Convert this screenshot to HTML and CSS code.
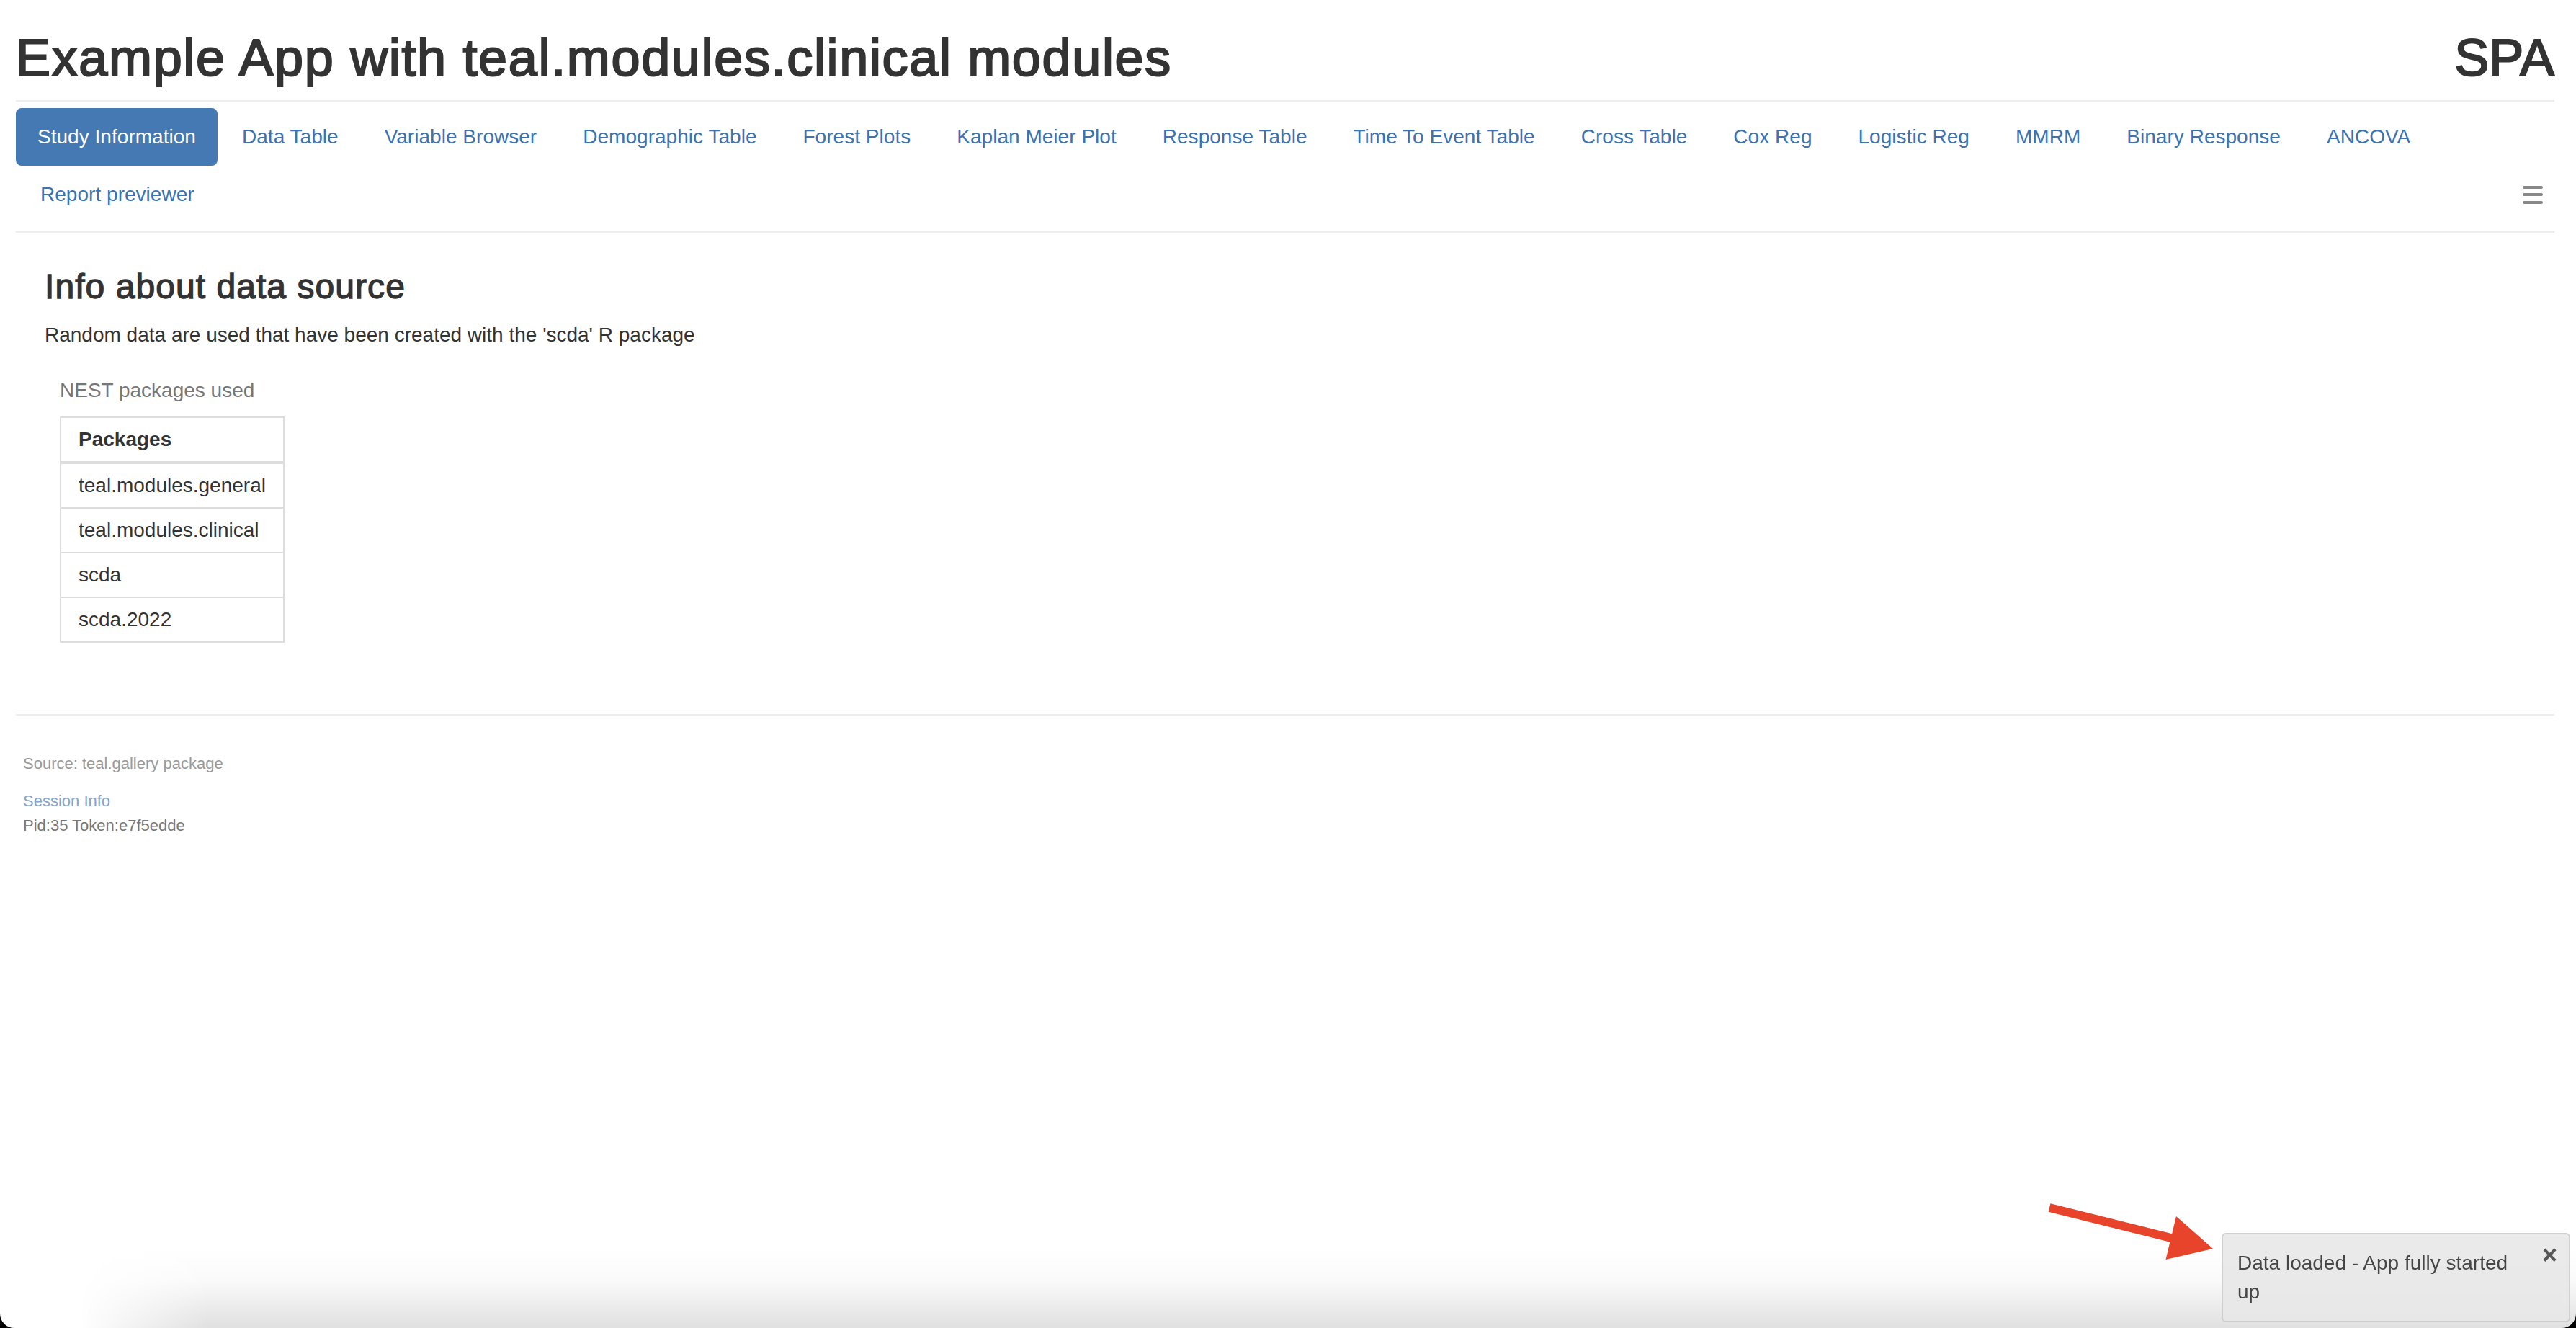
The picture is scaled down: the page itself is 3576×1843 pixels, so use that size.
FILE: index.html
```
<!DOCTYPE html>
<html lang="en">
<head>
<meta charset="utf-8">
<title>Example App with teal.modules.clinical modules</title>
<link rel="stylesheet" href="styles.css">
</head>
<body>
<div class="page">
  <header class="app-header">
    <h1 class="app-title">Example App with teal.modules.clinical modules</h1>
    <span class="app-brand">SPA</span>
  </header>
  <hr class="rule">
  <nav class="tabs">
    <ul class="nav-pills">
      <li class="active"><a>Study Information</a></li>
      <li><a>Data Table</a></li>
      <li><a>Variable Browser</a></li>
      <li><a>Demographic Table</a></li>
      <li><a>Forest Plots</a></li>
      <li><a>Kaplan Meier Plot</a></li>
      <li><a>Response Table</a></li>
      <li><a>Time To Event Table</a></li>
      <li><a>Cross Table</a></li>
      <li><a>Cox Reg</a></li>
      <li><a>Logistic Reg</a></li>
      <li><a>MMRM</a></li>
      <li><a>Binary Response</a></li>
      <li><a>ANCOVA</a></li>
      <li><a>Report previewer</a></li>
      <li class="menu-toggle"><span class="bars"><i></i><i></i><i></i></span></li>
    </ul>
  </nav>
  <hr class="rule rule-nav">
  <main class="content">
    <h3 class="section-title">Info about data source</h3>
    <p class="lead-text">Random data are used that have been created with the 'scda' R package</p>
    <div class="table-wrap">
      <table class="pkg-table">
        <caption>NEST packages used</caption>
        <thead>
          <tr><th>Packages</th></tr>
        </thead>
        <tbody>
          <tr><td>teal.modules.general</td></tr>
          <tr><td>teal.modules.clinical</td></tr>
          <tr><td>scda</td></tr>
          <tr><td>scda.2022</td></tr>
        </tbody>
      </table>
    </div>
  </main>
  <hr class="rule rule-footer">
  <footer class="footer">
    <p class="source">Source: teal.gallery package</p>
    <a class="session-link">Session Info</a>
    <div class="session-id">Pid:35 Token:e7f5edde</div>
  </footer>
</div>

<div class="bottom-shade"></div>

<div class="notification-panel">
  <div class="notification">
    <span class="notification-close">×</span>
    <div class="notification-content">Data loaded - App fully started up</div>
  </div>
</div>

<svg class="annot-arrow" width="260" height="110" viewBox="0 0 260 110" xmlns="http://www.w3.org/2000/svg">
  <line x1="15" y1="21" x2="188" y2="64" stroke="#e8432b" stroke-width="12"/>
  <polygon points="242,78 176.5,93 191,33" fill="#e8432b"/>
</svg>
</body>
</html>
```
FILE: styles.css
```
html {
  background: #000;
  height: 100%;
}

body {
  margin: 0;
  height: 100vh;
  overflow: hidden;
  background: #fff;
  border-radius: 0 0 20px 20px;
  font-family: "Liberation Sans", Arial, sans-serif;
  font-size: 28px;
  line-height: 40px;
  color: #333;
  position: relative;
}

.page {
  padding: 0 30px 0 22px;
}

/* header */
.app-header {
  display: flex;
  justify-content: space-between;
  align-items: baseline;
  padding: 41px 0 19px;
}

.app-title,
.app-brand {
  margin: 0;
  font-size: 72px;
  line-height: 1.1;
  font-weight: 400;
  -webkit-text-stroke: 0.03em #333;
  letter-spacing: 0.023em;
  color: #333;
}

.app-brand {
  letter-spacing: 0;
}

.rule {
  height: 2px;
  border: 0;
  margin: 0;
  background: #eee;
}

/* nav pills */
.tabs {
  margin-top: 9px;
}

.nav-pills {
  list-style: none;
  margin: 0;
  padding: 0;
  display: flex;
  flex-wrap: wrap;
  align-items: center;
}

.nav-pills li + li {
  margin-left: 4px;
}

.nav-pills a {
  display: block;
  padding: 20px 30px;
  line-height: 40px;
  color: #3a73b0;
  border-radius: 8px;
  letter-spacing: 0.03px;
}

.nav-pills li.active a {
  background: #4479b3;
  color: #fff;
}

.nav-pills .menu-toggle {
  margin-left: auto;
  padding: 0 16px 0 0;
  display: flex;
  align-items: center;
  height: 80px;
}

.bars {
  display: flex;
  flex-direction: column;
  gap: 6.5px;
}

.bars i {
  display: block;
  width: 28px;
  height: 4px;
  border-radius: 2px;
  background: #888;
}

.rule-nav {
  margin-top: 11px;
}

/* content */
.content {
  padding: 0 40px;
}

.section-title {
  margin: 49px 0 20px;
  font-size: 48px;
  line-height: 1.1;
  font-weight: 400;
  -webkit-text-stroke: 0.028em #333;
  letter-spacing: 0.022em;
}

.lead-text {
  margin: 0 0 21px;
}

.table-wrap {
  margin-left: 21px;
}

.pkg-table {
  border-collapse: collapse;
  border: 2px solid #ddd;
}

.pkg-table caption {
  text-align: left;
  color: #777;
  padding: 16px 0;
}

.pkg-table th,
.pkg-table td {
  padding: 10px 24px;
  line-height: 40px;
  text-align: left;
  border: 2px solid #ddd;
}

.pkg-table th {
  font-weight: 700;
  border-bottom: 4px solid #ddd;
}

.rule-footer {
  margin-top: 99px;
}

/* footer */
.footer {
  padding-left: 10px;
  padding-top: 52px;
}

.source {
  margin: 0 0 24px;
  font-size: 22px;
  line-height: 30px;
  color: #999;
}

.session-link {
  display: block;
  font-size: 22px;
  line-height: 26px;
  color: #85a4cc;
}

.session-id {
  margin-top: 8px;
  font-size: 22px;
  line-height: 26px;
  color: #777;
}

/* bottom window shade */
.bottom-shade {
  position: absolute;
  left: 0;
  right: 0;
  bottom: 0;
  height: 110px;
  z-index: 1;
  pointer-events: none;
  background: linear-gradient(to bottom, rgba(0,0,0,0) 0%, rgba(0,0,0,0.02) 40%, rgba(0,0,0,0.12) 100%);
  -webkit-mask-image: linear-gradient(to right, transparent 110px, #000 290px);
  mask-image: linear-gradient(to right, transparent 110px, #000 290px);
}

/* notification */
.notification-panel {
  position: absolute;
  right: 0;
  bottom: 0;
  width: 500px;
  padding: 4px;
  box-sizing: border-box;
  z-index: 2;
}

.notification {
  margin: 4px;
  padding: 20px 16px 20px 20px;
  background: #e8e8e8;
  border: 2px solid #ccc;
  border-radius: 6px;
  opacity: 0.9;
  color: #333;
}

.notification-close {
  float: right;
  position: relative;
  top: -11px;
  padding-left: 12px;
  font-size: 36px;
  font-weight: 700;
  color: #444;
}

/* annotation arrow */
.annot-arrow {
  position: absolute;
  left: 2830px;
  top: 1655px;
  z-index: 3;
}
```
